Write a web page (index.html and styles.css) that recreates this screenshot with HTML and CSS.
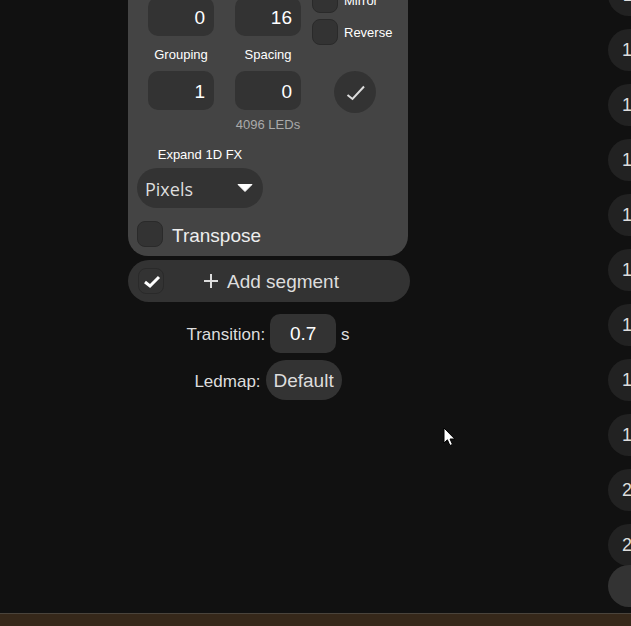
FILE: index.html
```html
<!DOCTYPE html>
<html lang="en">
<head>
<meta charset="utf-8">
<title>Segments</title>
<link rel="stylesheet" href="styles.css">
</head>
<body>
<div class="main">
  <div class="left">
    <section class="panel">
      <div class="seg-grid">
        <div class="field field-r1 col1">0</div>
        <div class="field field-r1 col2">16</div>
        <div class="checks">
          <label class="check-row"><span class="box"></span><span class="small">Mirror</span></label>
          <label class="check-row"><span class="box"></span><span class="small">Reverse</span></label>
        </div>
        <div class="small center col1">Grouping</div>
        <div class="small center col2">Spacing</div>
        <div class="field col1">1</div>
        <div class="field col2">0</div>
        <button class="apply" aria-label="Apply">
          <svg width="42" height="42" viewBox="0 0 42 42"><polyline points="13.5,24 18.5,28 30,15.5" fill="none" stroke="#ddd" stroke-width="2"/></svg>
        </button>
        <div class="note col2">4096 LEDs</div>
      </div>
      <div class="expand">
        <div class="small center">Expand 1D FX</div>
        <div class="select"><span class="select-text">Pixels</span><svg width="16" height="8" viewBox="0 0 16 8"><path d="M1 0.5h14L8 7.5z" fill="#fff" stroke="#fff" stroke-linejoin="round"/></svg></div>
      </div>
      <label class="transpose"><span class="box"></span><span class="transpose-text">Transpose</span></label>
    </section>
    <div class="add-bar">
      <span class="box box-on">
        <svg width="26" height="26" viewBox="0 0 26 26"><polyline points="7,14 12,18 21,9" fill="none" stroke="#fff" stroke-width="3"/></svg>
      </span>
      <span class="add-label">
        <svg width="14" height="14" viewBox="0 0 14 14"><path d="M7 0v14M0 7h14" stroke="#ddd" stroke-width="2" fill="none"/></svg>
        <span class="add-text">Add segment</span>
      </span>
    </div>
    <div class="option-row"><span class="option-text">Transition:</span><span class="field field-center">0.7</span><span class="option-text">s</span></div>
    <div class="option-row ledmap"><span class="option-text">Ledmap:</span><span class="pill">Default</span></div>
  </div>
  <div class="numbers">
    <div class="num">11</div>
    <div class="num">12</div>
    <div class="num">13</div>
    <div class="num">14</div>
    <div class="num">15</div>
    <div class="num">16</div>
    <div class="num">17</div>
    <div class="num">18</div>
    <div class="num">19</div>
    <div class="num">20</div>
    <div class="num">21</div>
  </div>
  <div class="floating"></div>
  <svg class="cursor" width="14" height="20" viewBox="0 0 14 20"><path d="M1 1v15l3.4-3.2 2.5 5.7 2.6-1.1-2.5-5.4h4.8z" fill="#fff" stroke="#000" stroke-width="1"/></svg>
</div>
<footer class="bottom"></footer>
</body>
</html>
```
FILE: styles.css
```css
* { box-sizing: border-box; }
html, body { margin: 0; height: 100%; }
body {
  display: flex;
  flex-direction: column;
  overflow: hidden;
  background: #111;
  color: #fff;
  font-family: "Liberation Sans", Arial, sans-serif;
}
.main {
  position: relative;
  flex: 1;
  display: flex;
  overflow: hidden;
}
.bottom {
  height: 13px;
  background: #36281a;
  border-top: 1px solid #4a443c;
}
.left {
  width: 282px;
  margin-left: 128px;
  margin-top: -30px;
}
.panel {
  width: 280px;
  height: 286px;
  padding: 17px 0 0 9px;
  background: #444;
  border-radius: 0 0 20px 20px;
}
.seg-grid {
  margin-left: 11px;
  display: grid;
  grid-template-columns: 87px 77px 1fr;
  grid-template-rows: 49px 35px 39px 28px;
}
.col1 { grid-column: 1; }
.col2 { grid-column: 2; }
.field {
  width: 66px;
  height: 39px;
  padding: 1px 9px 0;
  background: #333;
  border-radius: 10px;
  font-size: 19px;
  line-height: 39px;
  text-align: right;
}
.field-r1 { align-self: end; }
.field-center { text-align: center; padding: 0; }
.checks {
  grid-column: 3;
  grid-row: 1 / span 2;
  display: flex;
  flex-direction: column;
  gap: 6px;
}
.check-row {
  display: flex;
  align-items: center;
  gap: 6px;
}
.box {
  flex: none;
  width: 26px;
  height: 26px;
  background: #333;
  border: 1px solid #2a2a2a;
  border-radius: 8px;
}
.box-on { display: block; background: #333; position: relative; }
.box-on svg { display: block; margin: -1px; }
.small { font-size: 13px; color: #fff; }
.center {
  align-self: center;
  text-align: center;
}
.seg-grid .center { width: 66px; padding-top: 2px; }
.apply {
  grid-column: 3;
  width: 42px;
  height: 42px;
  margin: 0 0 0 22px;
  padding: 0;
  border: 0;
  border-radius: 50%;
  background: #333;
}
.apply svg { display: block; }
.note {
  width: 66px;
  padding-top: 7px;
  font-size: 13px;
  line-height: 15px;
  color: #aaa;
  text-align: center;
  white-space: nowrap;
}
.expand {
  width: 126px;
  margin-top: 9px;
}
.select {
  height: 40px;
  margin-top: 6px;
  padding: 0 10px 0 8px;
  display: flex;
  align-items: center;
  justify-content: space-between;
  background: #333;
  border-radius: 20px;
  font-family: "Open Sans", "Liberation Sans", sans-serif;
  font-size: 18px;
  color: #ddd;
}
.select-text { padding-top: 1px; }
.transpose {
  display: flex;
  align-items: center;
  gap: 9px;
  margin-top: 13px;
  font-size: 19px;
  color: #eee;
}
.transpose-text { padding-top: 4px; }
.add-bar {
  position: relative;
  height: 42px;
  margin-top: 4px;
  padding-left: 10px;
  display: flex;
  align-items: center;
  background: #333;
  border-radius: 21px;
}
.add-label {
  margin-left: 40px;
  display: flex;
  align-items: center;
  gap: 9px;
  font-size: 19px;
  color: #ddd;
}
.add-text { padding-top: 1px; }
.option-row {
  display: flex;
  align-items: center;
  justify-content: center;
  gap: 5px;
  margin-top: 12px;
  padding-right: 2px;
  font-size: 17px;
  color: #ddd;
}
.option-text { padding-top: 3px; }
.option-row .field { color: #fff; }
.ledmap { margin-top: 7px; }
.pill {
  width: 76px;
  height: 40px;
  line-height: 42px;
  text-align: center;
  background: #333;
  border-radius: 20px;
  font-size: 19px;
}
.numbers {
  margin-left: auto;
  margin-top: -26px;
  width: 23px;
  display: flex;
  flex-direction: column;
  gap: 13px;
}
.num {
  flex: none;
  width: 42px;
  height: 42px;
  padding-left: 6px;
  background: #222;
  border-radius: 50%;
  color: #ddd;
  font-size: 18px;
  line-height: 42px;
  text-align: center;
}
.floating {
  position: absolute;
  left: 608px;
  bottom: 6px;
  width: 42px;
  height: 42px;
  background: #333;
  border-radius: 50%;
}
.cursor {
  position: absolute;
  left: 443px;
  top: 427px;
}
```
